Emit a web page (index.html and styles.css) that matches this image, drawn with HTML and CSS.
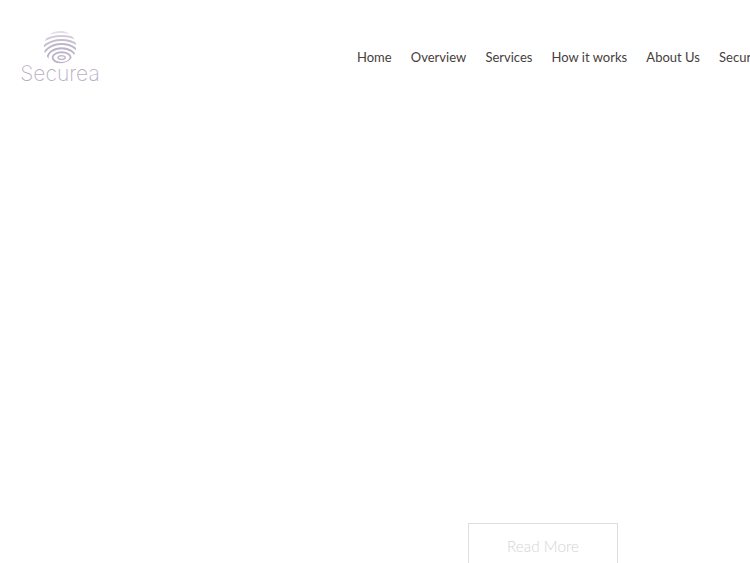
FILE: index.html
```html
<!DOCTYPE html>
<html lang="en">
<head>
<meta charset="utf-8">
<title>Securea</title>
<link rel="stylesheet" href="styles.css">
</head>
<body>
<header class="header">
  <a class="logo" href="#">
    <svg class="logo-mark" width="34" height="34" viewBox="0 0 34 34" fill="none">
      <defs>
        <clipPath id="globe"><circle cx="17" cy="17" r="16.2"/></clipPath>
      </defs>
      <g clip-path="url(#globe)" stroke-width="1.9">
        <ellipse stroke="#c4bbcd" stroke-width="1.5" cx="18.6" cy="27.6" rx="3.6" ry="1.9"/>
        <ellipse stroke="#bdb3c8" cx="18.6" cy="27.6" rx="9" ry="5.4"/>
        <ellipse stroke="#bdb3c8" cx="18.6" cy="28" rx="14" ry="9.8"/>
        <ellipse stroke="#bfb6ca" cx="18.6" cy="28.4" rx="19" ry="14.4"/>
        <ellipse stroke="#c6bed0" cx="18.6" cy="29" rx="24" ry="19"/>
        <ellipse stroke="#d2ccda" cx="18.6" cy="30" rx="30" ry="24"/>
        <ellipse stroke="#e2dee7" cx="18.6" cy="31" rx="37" ry="29"/>
      </g>
    </svg>
    <span class="logo-text">Securea</span>
  </a>
  <nav class="nav">
    <a href="#">Home</a>
    <a href="#">Overview</a>
    <a href="#">Services</a>
    <a href="#">How it works</a>
    <a href="#">About Us</a>
    <a href="#">Security</a>
  </nav>
</header>
<main class="main">
  <a class="button" href="#">Read More</a>
</main>
</body>
</html>
```
FILE: styles.css
```css
html, body {
  margin: 0;
  height: 563px;
  overflow: hidden;
  background: #fff;
}
body {
  font-family: "Lato", "Liberation Sans", sans-serif;
}
a {
  text-decoration: none;
}
.header {
  display: flex;
  align-items: flex-start;
  height: 523px;
  box-sizing: border-box;
  padding: 30px 0 0 20px;
}
.logo {
  display: flex;
  flex-direction: column;
  align-items: center;
  width: 80px;
  flex: none;
}
.logo-mark {
  display: block;
}
.logo-text {
  font-family: "Inter", "Liberation Sans", sans-serif;
  font-weight: 250;
  font-size: 21px;
  line-height: 19px;
  color: #b9afc4;
}
.nav {
  display: flex;
  flex: none;
  gap: 19.2px;
  margin: 18px 0 0 257px;
  white-space: nowrap;
  font-size: 13px;
  line-height: 18px;
}
.nav a {
  color: #46403c;
}
.main {
  padding-left: 468px;
}
.button {
  display: block;
  box-sizing: border-box;
  width: 150px;
  height: 60px;
  border: 1px solid #dedede;
  text-align: center;
  padding-top: 12px;
  font-size: 15.3px;
  font-weight: 300;
  line-height: 20px;
  color: #d4d4d4;
}
```
